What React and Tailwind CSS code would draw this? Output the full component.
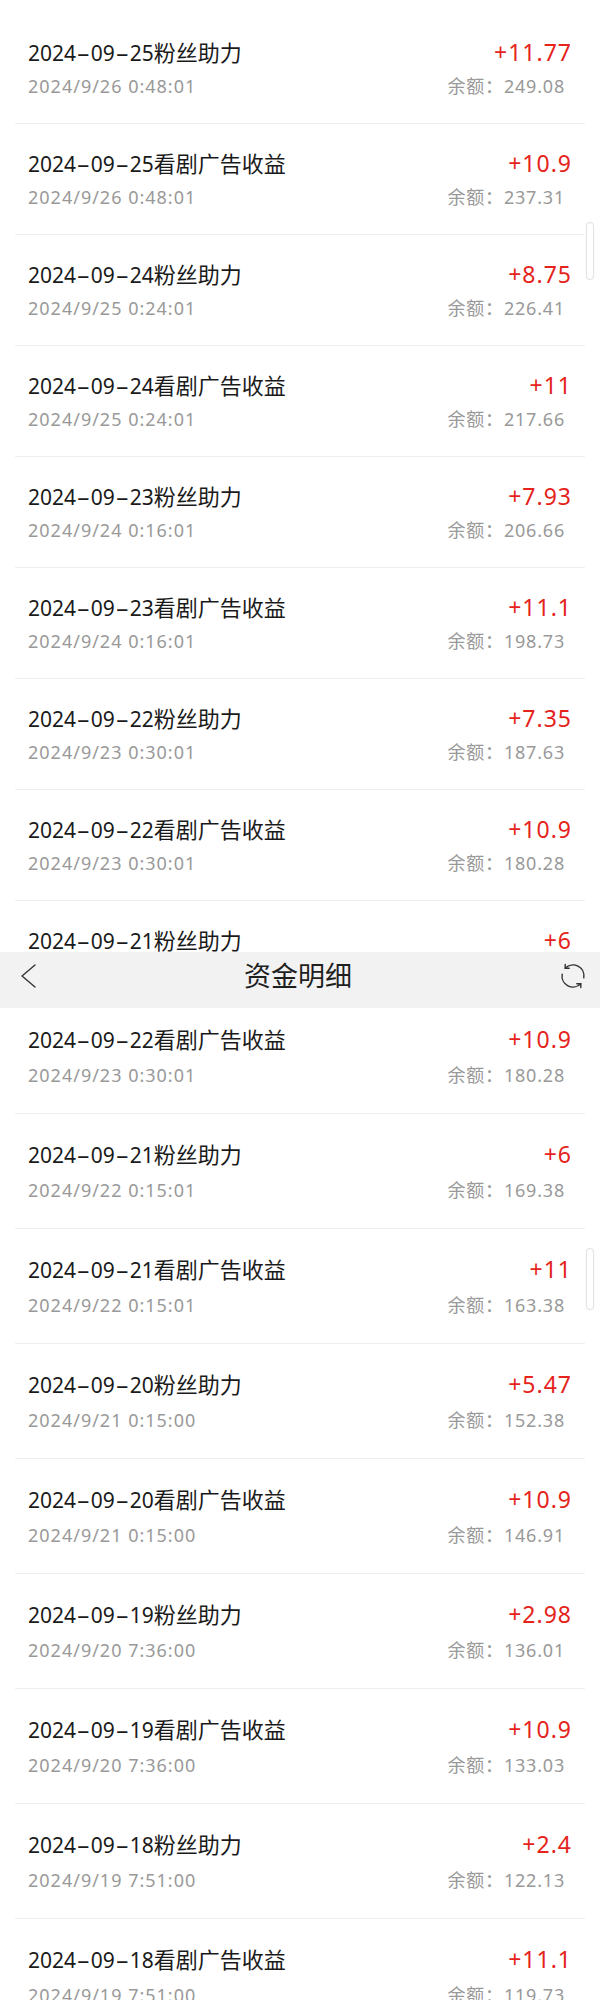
import React from 'react';

const topRows = [
  { date: '2024-09-25', label: '粉丝助力', amount: '+11.77', time: '2024/9/26 0:48:01', balance: '249.08' },
  { date: '2024-09-25', label: '看剧广告收益', amount: '+10.9', time: '2024/9/26 0:48:01', balance: '237.31' },
  { date: '2024-09-24', label: '粉丝助力', amount: '+8.75', time: '2024/9/25 0:24:01', balance: '226.41' },
  { date: '2024-09-24', label: '看剧广告收益', amount: '+11', time: '2024/9/25 0:24:01', balance: '217.66' },
  { date: '2024-09-23', label: '粉丝助力', amount: '+7.93', time: '2024/9/24 0:16:01', balance: '206.66' },
  { date: '2024-09-23', label: '看剧广告收益', amount: '+11.1', time: '2024/9/24 0:16:01', balance: '198.73' },
  { date: '2024-09-22', label: '粉丝助力', amount: '+7.35', time: '2024/9/23 0:30:01', balance: '187.63' },
  { date: '2024-09-22', label: '看剧广告收益', amount: '+10.9', time: '2024/9/23 0:30:01', balance: '180.28' },
  { date: '2024-09-21', label: '粉丝助力', amount: '+6', time: '2024/9/22 0:15:01', balance: '169.38' },
];

const bottomRows = [
  { date: '2024-09-22', label: '看剧广告收益', amount: '+10.9', time: '2024/9/23 0:30:01', balance: '180.28' },
  { date: '2024-09-21', label: '粉丝助力', amount: '+6', time: '2024/9/22 0:15:01', balance: '169.38' },
  { date: '2024-09-21', label: '看剧广告收益', amount: '+11', time: '2024/9/22 0:15:01', balance: '163.38' },
  { date: '2024-09-20', label: '粉丝助力', amount: '+5.47', time: '2024/9/21 0:15:00', balance: '152.38' },
  { date: '2024-09-20', label: '看剧广告收益', amount: '+10.9', time: '2024/9/21 0:15:00', balance: '146.91' },
  { date: '2024-09-19', label: '粉丝助力', amount: '+2.98', time: '2024/9/20 7:36:00', balance: '136.01' },
  { date: '2024-09-19', label: '看剧广告收益', amount: '+10.9', time: '2024/9/20 7:36:00', balance: '133.03' },
  { date: '2024-09-18', label: '粉丝助力', amount: '+2.4', time: '2024/9/19 7:51:00', balance: '122.13' },
  { date: '2024-09-18', label: '看剧广告收益', amount: '+11.1', time: '2024/9/19 7:51:00', balance: '119.73' },
];

const font = { fontFamily: '"Noto Sans", "Noto Sans CJK SC", sans-serif' };

// the app's dash is longer than a plain hyphen
const DateText = ({ text }) =>
  text.split('-').map((part, i) => (
    <React.Fragment key={i}>
      {i > 0 && <span className="mx-[4px] inline-block scale-x-[2]">-</span>}
      {part}
    </React.Fragment>
  ));

const RecordRow = ({ row, tall }) => (
  <div
    className={
      tall
        ? 'mx-[15px] h-[115px] border-b border-[#efefef] px-[13px] pt-[25px]'
        : 'mx-[15px] h-[111px] border-b border-[#efefef] px-[13px] pt-[24px]'
    }
  >
    <div className="flex h-[30px] items-center justify-between">
      <p className="whitespace-nowrap text-[21px] leading-[30px] text-[#1a1a1a]">
        <DateText text={row.date} />
        <span className="text-[22px]">{row.label}</span>
      </p>
      <span className="text-[23px] leading-[30px] tracking-[1px] text-[#e5231b]">
        {row.amount}
      </span>
    </div>
    <div
      className={
        tall
          ? 'mt-[9px] flex h-[24px] items-center justify-between pr-[7px] text-[#999999]'
          : 'mt-[7px] flex h-[24px] items-center justify-between pr-[7px] text-[#999999]'
      }
    >
      <span className="text-[18px] leading-[24px] tracking-[1px]">{row.time}</span>
      <span className="text-[18px] leading-[24px] tracking-[0.8px]">
        余额：{row.balance}
      </span>
    </div>
  </div>
);

const ScrollThumb = ({ className }) => (
  <div
    className={`absolute w-[8px] rounded-full border border-[#e3e3e3] bg-white shadow-[0_0_2px_rgba(0,0,0,0.06)] ${className}`}
  />
);

const App = () => {
  return (
    <div className="relative h-[2000px] overflow-hidden bg-white" style={font}>
      <div className="h-[952px] overflow-hidden pt-[13px]">
        {topRows.map((row, i) => (
          <RecordRow key={i} row={row} />
        ))}
      </div>

      <div className="relative z-10 flex h-[56px] items-center justify-between bg-[#f2f2f2] pb-[8px] pl-[21px] pr-[13px]">
        <svg width="16" height="24" viewBox="0 0 16 24" fill="none">
          <polyline
            points="14,1 1,12 14,23"
            stroke="#333"
            strokeWidth="1.4"
            strokeLinecap="round"
            strokeLinejoin="round"
          />
        </svg>
        <h1 className="text-[27px] leading-[36px] text-[#1f1f1f]">资金明细</h1>
        <svg width="28" height="28" viewBox="0 0 28 28" fill="none" stroke="#333" strokeWidth="1.4" strokeLinecap="round" strokeLinejoin="round">
          <path d="M6.2 6.2 A11 11 0 0 1 24.8 15.9" />
          <path d="M21.8 21.8 A11 11 0 0 1 3.2 12.1" />
          <polyline points="10.2,6.2 6.2,6.2 6.2,2.4" />
          <polyline points="17.8,21.8 21.8,21.8 21.8,25.6" />
        </svg>
      </div>

      <div className="-mt-[9px]">
        {bottomRows.map((row, i) => (
          <RecordRow key={i} row={row} tall />
        ))}
      </div>

      <ScrollThumb className="left-[586px] top-[222px] h-[58px]" />
      <ScrollThumb className="left-[586px] top-[1248px] h-[62px]" />
    </div>
  );
};

export default App;
